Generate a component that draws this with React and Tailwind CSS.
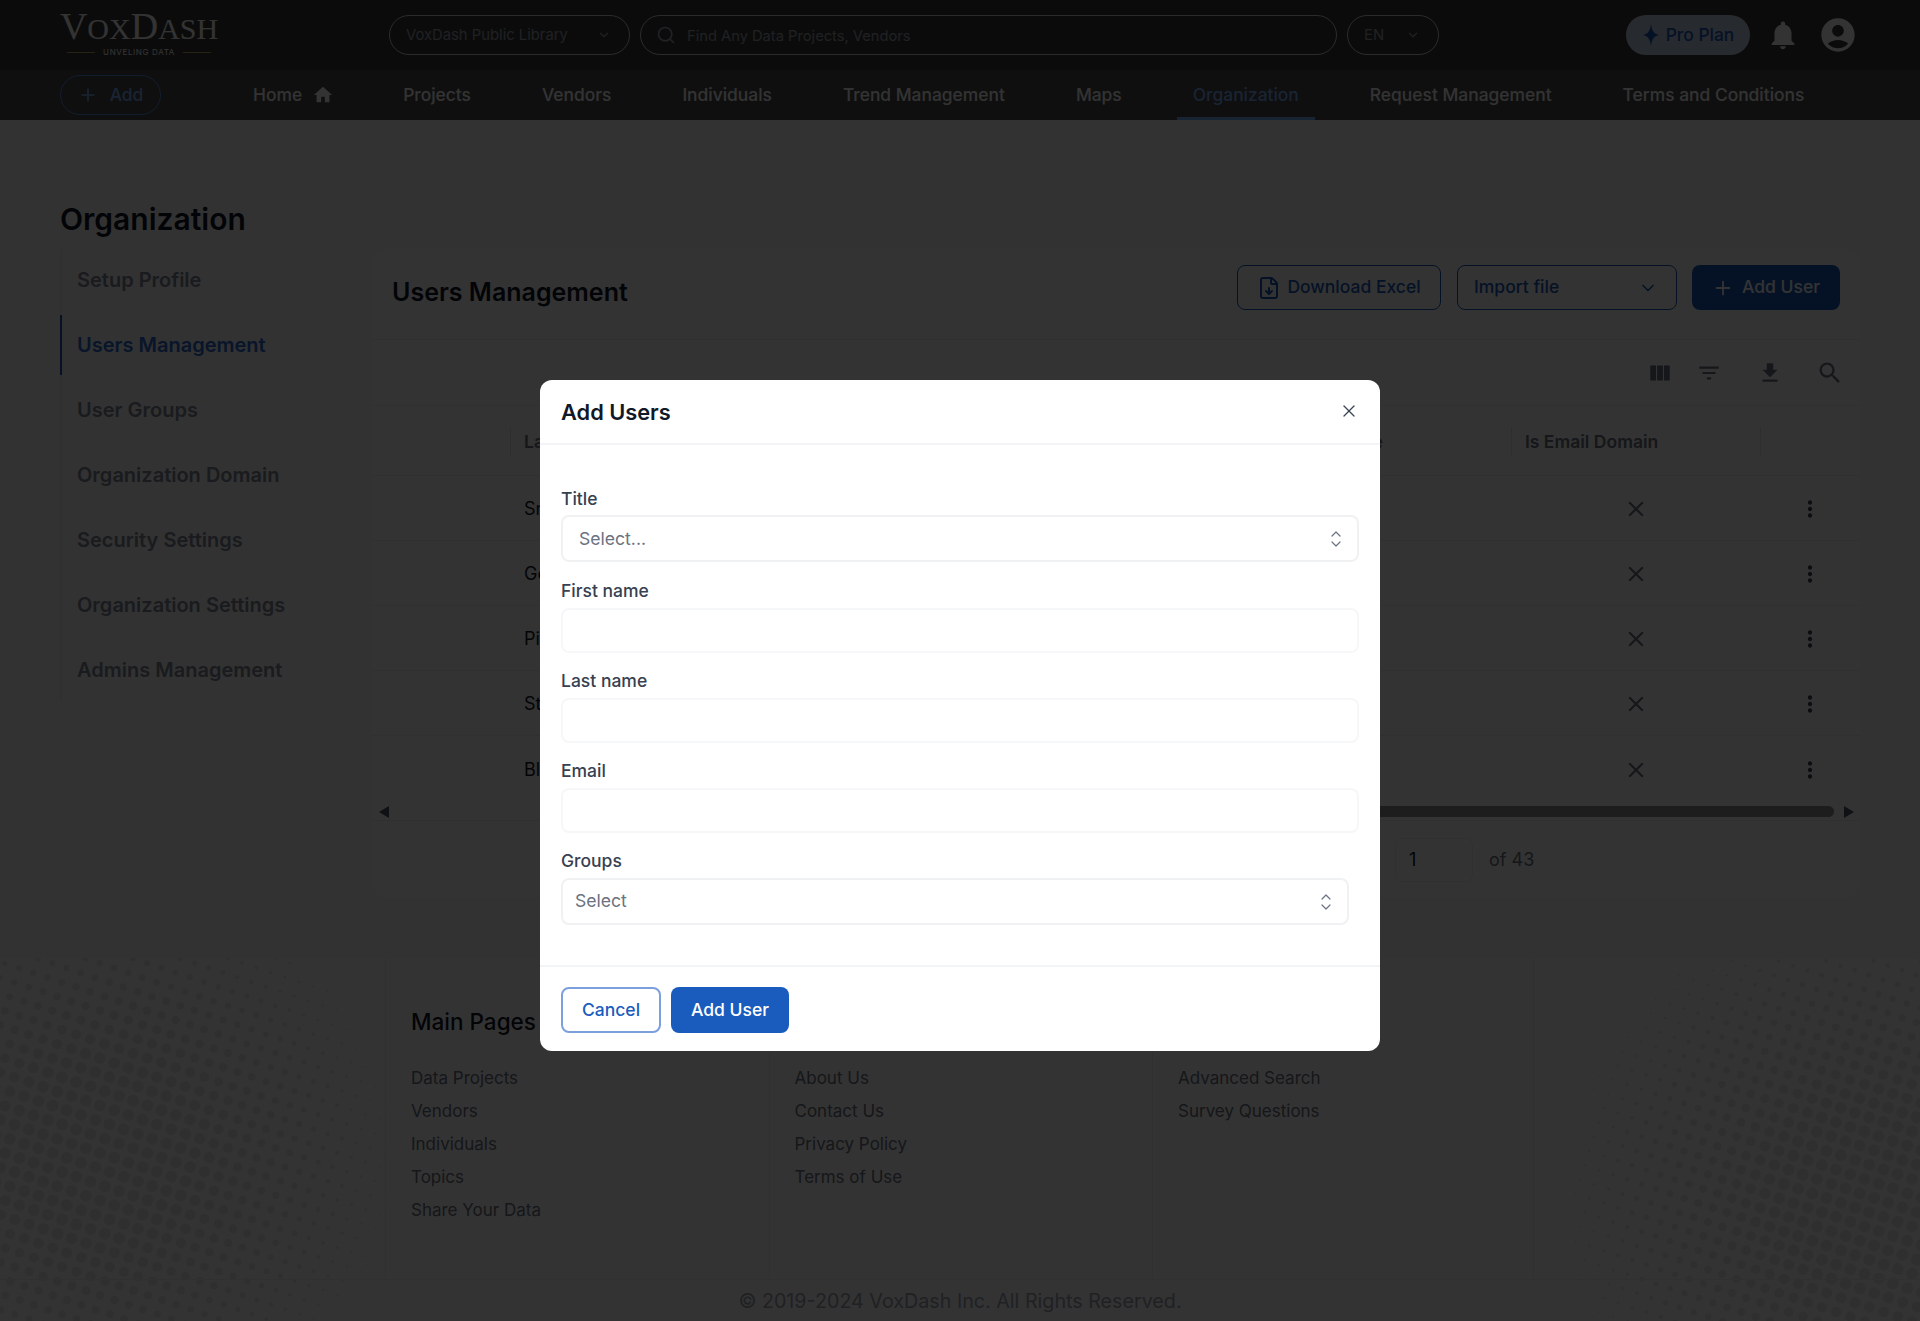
import { ChevronDown, FileDown, Plus, Search, X } from 'lucide-react';
import {
  MdAccountCircle,
  MdClose,
  MdFileDownload,
  MdFilterList,
  MdHome,
  MdMoreVert,
  MdNotifications,
  MdSearch,
  MdViewColumn,
} from 'react-icons/md';

const navItems = ['Projects', 'Vendors', 'Individuals', 'Trend Management', 'Maps', 'Organization', 'Request Management', 'Terms and Conditions'];
const sideItems = ['Setup Profile', 'Users Management', 'User Groups', 'Organization Domain', 'Security Settings', 'Organization Settings', 'Admins Management'];
const rows = ['Smy', 'Gomez', 'Pitt', 'Stone', 'Bly'];
const footerCols = [
  { title: 'Main Pages', links: ['Data Projects', 'Vendors', 'Individuals', 'Topics', 'Share Your Data'] },
  { title: null, links: ['About Us', 'Contact Us', 'Privacy Policy', 'Terms of Use'] },
  { title: null, links: ['Advanced Search', 'Survey Questions'] },
];

// halftone dots for the footer corners
function halftone(cx, cy, reach, maxR) {
  const dots = [];
  const step = 15;
  const angle = 0.32;
  for (let i = -40; i < 40; i++) {
    for (let j = -40; j < 40; j++) {
      const x = cx + (i * Math.cos(angle) - j * Math.sin(angle)) * step;
      const y = cy + (i * Math.sin(angle) + j * Math.cos(angle)) * step;
      const d = Math.hypot(x - cx, (y - cy) * 1.05);
      const r = maxR * (1 - d / reach);
      if (r > 0.4) dots.push({ x, y, r: Math.min(r * 1.4, maxR) });
    }
  }
  return dots;
}

const leftDots = halftone(100, 195, 320, 6);
const rightDots = halftone(340, 240, 340, 6);

function Halftone({ dots, className }) {
  return (
    <svg className={className} width="386" height="363" viewBox="0 0 386 363">
      {dots.map((d, i) => (
        <circle key={i} cx={d.x} cy={d.y} r={d.r} fill="#ebebeb" />
      ))}
    </svg>
  );
}

function UpDown() {
  return (
    <svg width="12" height="18" viewBox="0 0 12 18" fill="none" stroke="#6b7280" strokeWidth="1.2" strokeLinecap="round" strokeLinejoin="round">
      <path d="M2 6 L6 2 L10 6" />
      <path d="M2 12 L6 16 L10 12" />
    </svg>
  );
}

function Logo() {
  return (
    <div className="flex w-[158px] flex-col items-center">
      <div className="flex h-[30px] items-baseline font-['Liberation_Serif',serif] leading-[25px] text-white">
        <span className="text-[38px]">V</span>
        <span className="text-[30px]">OX</span>
        <span className="text-[38px]">D</span>
        <span className="text-[30px]">ASH</span>
      </div>
      <div className="mt-1 flex h-2 w-full items-center justify-center gap-2">
        <div className="h-px w-7 bg-[#c9a86a]" />
        <span className="text-[8px] leading-none tracking-[0.08em] text-white">UNVELING DATA</span>
        <div className="h-px w-7 bg-[#c9a86a]" />
      </div>
    </div>
  );
}

function Header() {
  return (
    <header className="flex h-[70px] items-center bg-[#3a3a3a] pl-[60px] pr-[62px]">
      <Logo />
      <button className="ml-[171px] flex h-10 w-[241px] items-center justify-between rounded-full border border-[#d1d5db] pl-4 pr-[18px] text-[14.8px] text-[#9ca3af]">
        VoxDash Public Library
        <ChevronDown size={14} />
      </button>
      <div className="ml-[10px] flex h-10 w-[697px] items-center gap-[11px] rounded-full border border-[#d1d5db] pl-[15px] text-[14.7px] text-[#9ca3af]">
        <Search size={20} />
        <span className="pt-[2px]">Find Any Data Projects, Vendors</span>
      </div>
      <button className="ml-[10px] flex h-10 w-[92px] items-center justify-between rounded-full border border-[#d1d5db] pl-4 pr-[18px] text-[14.8px] text-[#9ca3af]">
        EN
        <ChevronDown size={14} />
      </button>
      <button className="ml-auto flex h-10 w-[124px] items-center justify-center gap-[6px] rounded-full bg-[#c4cfe6] text-[17.4px] font-medium text-[#1a5cbe]">
        <svg width="18" height="24" viewBox="0 0 18 24" fill="#1a5cbe">
          <path d="M9 1 C10 8 12 11 17 12 C12 13 10 16 9 23 C8 16 6 13 1 12 C6 11 8 8 9 1 Z" />
        </svg>
        Pro Plan
      </button>
      <MdNotifications size={34} className="ml-[16px] text-white" />
      <MdAccountCircle size={40} className="ml-[18px] text-white" />
    </header>
  );
}

function Nav() {
  return (
    <nav className="flex h-[50px] items-center bg-[#4b4b4b] pl-[60px]">
      <button className="flex h-10 w-[101px] items-center justify-center gap-[12px] rounded-full border border-[#5b8fe0] text-[17.4px] font-medium text-[#7db4ff]">
        <Plus size={20} />
        Add
      </button>
      <a className="ml-[92px] mr-[69px] flex items-center gap-[10px] text-[17.4px] font-medium text-white">
        Home
        <MdHome size={22} />
      </a>
      <div className="flex items-center gap-[71px]">
        {navItems.map((item) => (
          <a
            key={item}
            className={
              item === 'Organization'
                ? 'relative text-[17.4px] font-medium text-[#7db4ff] after:absolute after:-inset-x-4 after:-bottom-[12px] after:h-[3px] after:bg-[#7db4ff]'
                : 'text-[17.4px] font-medium text-white'
            }
          >
            {item}
          </a>
        ))}
      </div>
    </nav>
  );
}

function Sidebar() {
  return (
    <aside className="mt-[2px] h-[450px] w-[312px]">
      <div className="flex w-[252px] flex-col gap-[5px] border-l-2 border-[#eceef1]">
        {sideItems.map((item) => (
          <div
            key={item}
            className={
              item === 'Users Management'
                ? '-ml-[2px] flex h-[60px] items-center border-l-2 border-[#1a5cbe] pl-[15px] text-xl font-semibold text-[#2a6bd0]'
                : 'flex h-[60px] items-center pl-[15px] text-xl font-semibold text-[#7f8694]'
            }
          >
            {item}
          </div>
        ))}
      </div>
    </aside>
  );
}

function UsersCard() {
  return (
    <section className="h-[650px] w-[1488px] rounded-2xl bg-white">
      <div className="flex h-[92px] items-center border-b border-[#eceef1] pl-5 pr-5">
        <h2 className="pb-[2px] text-[25px] font-semibold text-[#111827]">Users Management</h2>
        <div className="mb-[13px] ml-auto flex items-center">
          <button className="flex h-[45px] w-[204px] items-center justify-center gap-[6px] rounded-lg border border-[#1a5cbe] pt-[1px] text-[17.5px] font-medium text-[#1a5cbe]">
            <FileDown size={24} />
            Download Excel
          </button>
          <button className="ml-4 flex h-[45px] w-[220px] items-center justify-between rounded-lg border border-[#1a5cbe] pl-4 pr-[18px] pt-[1px] text-[17.5px] font-medium text-[#1a5cbe]">
            Import file
            <ChevronDown size={20} />
          </button>
          <button className="ml-[15px] flex h-[45px] w-[148px] items-center justify-center gap-[8px] rounded-lg bg-[#1a5cbe] pt-[1px] text-[17.5px] font-medium text-white">
            <Plus size={22} />
            Add User
          </button>
        </div>
      </div>
      <div className="flex h-[66px] items-center justify-end gap-[23px] border-b border-[#eceef1] pr-[16px] text-[#6b7280]">
        <MdViewColumn size={26} />
        <MdFilterList size={26} />
        <MdFileDownload size={26} className="ml-[12px]" />
        <MdSearch size={28} className="ml-[10px]" />
      </div>
      <div className="flex h-[70px] items-center border-b border-[#eceef1] pl-[138px] pt-[2px] text-[17.5px] font-semibold text-[#6b7280]">
        <div className="h-[30px] w-[826px] border-l border-[#e5e7eb] pl-[13px] leading-[30px]">Last Name</div>
        <div className="h-[30px] w-[175px] pl-[10px] leading-[30px]">Role</div>
        <div className="h-[30px] w-[250px] border-x border-[#e5e7eb] pl-[13px] leading-[30px]">Is Email Domain</div>
      </div>
      {rows.map((name, i) => (
        <div key={name} className={i < 4 ? 'flex h-[65px] items-center border-b border-[#eceef1] pl-[152px] pt-[2px] text-lg text-[#111827]' : 'flex h-[65px] items-center pl-[152px] pt-[2px] text-lg text-[#111827]'}>
          <div className="w-[987px]">{name}</div>
          <div className="flex w-[250px] justify-center">
            <MdClose size={26} className="text-[#6b7280]" />
          </div>
          <div className="flex w-[98px] justify-center">
            <MdMoreVert size={26} className="text-[#374151]" />
          </div>
        </div>
      ))}
      <div className="flex h-[20px] items-center border-b border-[#eceef1] pl-[7px] pr-[6px] pt-[2px]">
        <svg width="10" height="12" viewBox="0 0 10 12" fill="#4b5563">
          <path d="M10 0 L10 12 L0 6 Z" />
        </svg>
        <div className="ml-[600px] h-[11px] flex-1 rounded-full bg-[#8f8f8f]" />
        <svg width="10" height="12" viewBox="0 0 10 12" fill="#4b5563" className="ml-[10px]">
          <path d="M0 0 L0 12 L10 6 Z" />
        </svg>
      </div>
      <div className="flex h-[76px] items-center pl-[1023px] pt-[2px]">
        <div className="flex h-[44px] w-[78px] items-center rounded-lg border border-[#eceef1] pl-[13px] text-lg text-[#111827]">1</div>
        <span className="ml-4 text-lg text-[#6b7280]">of 43</span>
      </div>
    </section>
  );
}

function Footer() {
  return (
    <footer className="relative h-[363px] overflow-hidden bg-white">
      <Halftone dots={leftDots} className="absolute left-0 top-0" />
      <Halftone dots={rightDots} className="absolute right-0 top-0" />
      <div className="relative flex h-[322px] border-b border-[#eceef1] pl-[385px]">
        {footerCols.map((col, i) => (
          <div key={i} className={i === 2 ? 'w-[382px] border-x border-[#eceef1] pl-[25px]' : 'w-[383.5px] border-l border-[#eceef1] pl-[25px]'}>
            <h3 className="mt-[49px] h-[30px] text-[22.5px] font-medium leading-[30px] text-[#111827]">{col.title}</h3>
            <ul className="mt-[25px] flex flex-col">
              {col.links.map((link) => (
                <li key={link} className="h-[33px] text-[17px] leading-[33px] text-[#6b7280]">
                  {link}
                </li>
              ))}
            </ul>
          </div>
        ))}
      </div>
      <p className="relative mt-[9px] text-center text-[19.7px] leading-[24px] text-[#9ca3af]">© 2019-2024 VoxDash Inc. All Rights Reserved.</p>
    </footer>
  );
}

function Field({ label, children }) {
  return (
    <div>
      <label className="block h-6 text-[17.5px] font-medium leading-6 text-[#374151]">{label}</label>
      {children}
    </div>
  );
}

function AddUsersModal() {
  return (
    <div className="absolute inset-0 flex justify-center bg-black/80 pt-[380px]">
      <div className="h-[671px] w-[840px] rounded-xl bg-white">
        <div className="flex h-[65px] items-center justify-between border-b-2 border-[#f3f4f6] pl-[21px] pr-[21px]">
          <h2 className="pt-[2px] text-[21.8px] font-semibold text-[#111827]">Add Users</h2>
          <X size={20} strokeWidth={1.5} className="-mt-[2px] text-[#374151]" />
        </div>
        <div className="px-[21px] pt-[42px]">
          <Field label="Title">
            <div className="mb-[17px] mt-1 flex h-[47px] items-center justify-between rounded-lg border-2 border-[#f0f1f3] pl-4 pr-[15px] text-[17.6px] text-[#6b7280]">
              <span className="pt-[1px]">Select...</span>
              <UpDown />
            </div>
          </Field>
          <Field label="First name">
            <input className="mb-4 mt-[5px] block h-[45px] w-full rounded-lg border-2 border-[#f6f7f8]" />
          </Field>
          <Field label="Last name">
            <input className="mb-4 mt-[5px] block h-[45px] w-full rounded-lg border-2 border-[#f6f7f8]" />
          </Field>
          <Field label="Email">
            <input className="mb-4 mt-[5px] block h-[45px] w-full rounded-lg border-2 border-[#f6f7f8]" />
          </Field>
          <Field label="Groups">
            <div className="mb-[40px] mt-[5px] flex h-[47px] w-[788px] items-center justify-between rounded-lg border-2 border-[#f0f1f3] pl-3 pr-[15px] text-[17.6px] text-[#6b7280]">
              Select
              <UpDown />
            </div>
          </Field>
        </div>
        <div className="flex gap-[10px] border-t-2 border-[#f3f4f6] pl-[21px] pt-[20px]">
          <button className="h-[46px] w-[100px] rounded-lg border-2 border-[#7ba0dc] text-[17.5px] font-medium text-[#1a5cbe]">Cancel</button>
          <button className="h-[46px] w-[118px] rounded-lg bg-[#1a5cbe] text-[17.5px] font-medium text-white">Add User</button>
        </div>
      </div>
    </div>
  );
}

export default function App() {
  return (
    <div className="relative h-[1321px] w-[1920px] overflow-hidden bg-[#fafafa] font-['Inter',sans-serif]">
      <Header />
      <Nav />
      <main className="pb-[49px] pl-[60px] pt-[81px]">
        <h1 className="text-[30px] font-semibold leading-9 text-[#111827]">Organization</h1>
        <div className="mt-[11px] flex h-[661px]">
          <Sidebar />
          <UsersCard />
        </div>
      </main>
      <Footer />
      <AddUsersModal />
    </div>
  );
}
